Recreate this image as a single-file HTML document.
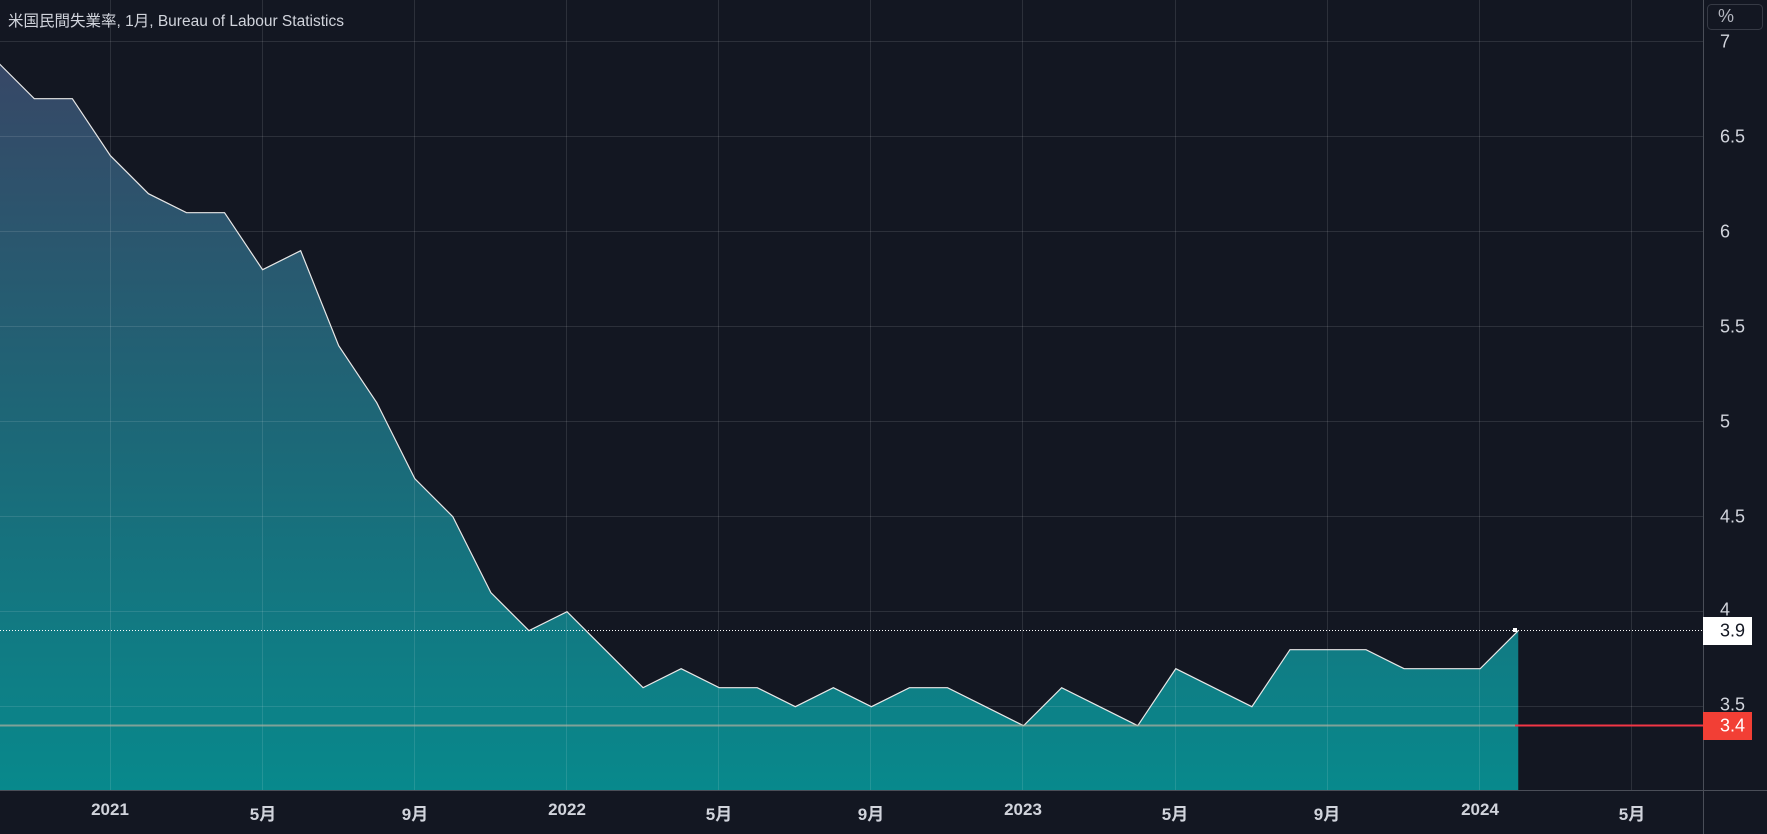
<!DOCTYPE html>
<html><head><meta charset="utf-8"><style>
html,body{margin:0;padding:0;background:#131722;}
body{width:1767px;height:834px;overflow:hidden;position:relative;font-family:"Liberation Sans","Noto Sans CJK JP",sans-serif;}
.t{position:absolute;color:#d1d4dc;}
.py{position:absolute;left:1720px;color:#d1d4dc;font-size:18px;transform:translateY(-50%);}
.px{position:absolute;top:800px;color:#d1d4dc;font-size:17px;font-weight:bold;transform:translateX(-50%);}
</style></head><body>
<svg width="1767" height="834" style="position:absolute;left:0;top:0">
<defs><linearGradient id="g" x1="0" y1="0" x2="0" y2="1" gradientUnits="objectBoundingBox">
<stop offset="0" stop-color="#08898c"/><stop offset="0.5" stop-color="#1d6777"/><stop offset="1" stop-color="#374766"/></linearGradient></defs>
<g transform="translate(110.4,1371.7) scale(38.05,-190)">
<polygon fill="url(#g)" points="-3,3.06 -3,6.9 -2,6.7 -1,6.7 0,6.4 1,6.2 2,6.1 3,6.1 4,5.8 5,5.9 6,5.4 7,5.1 8,4.7 9,4.5 10,4.1 11,3.9 12,4.0 13,3.8 14,3.6 15,3.7 16,3.6 17,3.6 18,3.5 19,3.6 20,3.5 21,3.6 22,3.6 23,3.5 24,3.4 25,3.6 26,3.5 27,3.4 28,3.7 29,3.6 30,3.5 31,3.8 32,3.8 33,3.8 34,3.7 35,3.7 36,3.7 37,3.9 37,3.06"/>
</g>
<g stroke="#ffffff" stroke-opacity="0.11" stroke-width="1">
<line x1="0" y1="41.5" x2="1703" y2="41.5"/><line x1="0" y1="136.5" x2="1703" y2="136.5"/><line x1="0" y1="231.5" x2="1703" y2="231.5"/><line x1="0" y1="326.5" x2="1703" y2="326.5"/><line x1="0" y1="421.5" x2="1703" y2="421.5"/><line x1="0" y1="516.5" x2="1703" y2="516.5"/><line x1="0" y1="611.5" x2="1703" y2="611.5"/><line x1="0" y1="706.5" x2="1703" y2="706.5"/>
<line x1="110.5" y1="0" x2="110.5" y2="790"/><line x1="262.5" y1="0" x2="262.5" y2="790"/><line x1="414.5" y1="0" x2="414.5" y2="790"/><line x1="566.5" y1="0" x2="566.5" y2="790"/><line x1="718.5" y1="0" x2="718.5" y2="790"/><line x1="870.5" y1="0" x2="870.5" y2="790"/><line x1="1022.5" y1="0" x2="1022.5" y2="790"/><line x1="1175.5" y1="0" x2="1175.5" y2="790"/><line x1="1327.5" y1="0" x2="1327.5" y2="790"/><line x1="1479.5" y1="0" x2="1479.5" y2="790"/><line x1="1631.5" y1="0" x2="1631.5" y2="790"/>
</g>
<g transform="translate(110.4,1371.7) scale(38.05,-190)">
<polyline fill="none" stroke="#e8e8e8" stroke-width="1.2" vector-effect="non-scaling-stroke" points="-3,6.9 -2,6.7 -1,6.7 0,6.4 1,6.2 2,6.1 3,6.1 4,5.8 5,5.9 6,5.4 7,5.1 8,4.7 9,4.5 10,4.1 11,3.9 12,4.0 13,3.8 14,3.6 15,3.7 16,3.6 17,3.6 18,3.5 19,3.6 20,3.5 21,3.6 22,3.6 23,3.5 24,3.4 25,3.6 26,3.5 27,3.4 28,3.7 29,3.6 30,3.5 31,3.8 32,3.8 33,3.8 34,3.7 35,3.7 36,3.7 37,3.9"/>
</g>
<line x1="0" y1="630.5" x2="1703" y2="630.5" stroke="#ffffff" stroke-width="1" stroke-dasharray="1,2"/>
<line x1="0" y1="725.5" x2="1515" y2="725.5" stroke="#b0b0a0" stroke-width="2" opacity="0.7"/>
<line x1="1515" y1="725.5" x2="1703" y2="725.5" stroke="#f23645" stroke-width="2"/>
<rect x="1513" y="628" width="4" height="4" fill="#fff"/>
<rect x="0" y="791" width="1767" height="43" fill="#131722"/>
<line x1="1703.5" y1="0" x2="1703.5" y2="834" stroke="#4a4e58"/>
<line x1="0" y1="790.5" x2="1767" y2="790.5" stroke="#4a4e58"/>
<rect x="1707.5" y="4.5" width="55" height="25" rx="4" fill="none" stroke="#363a45"/>
<rect x="1703" y="617" width="49" height="28" fill="#ffffff"/>
<rect x="1703" y="712" width="49" height="28" fill="#f23f35"/>
</svg>
<div class="t" style="left:8px;top:9px;font-size:15.5px;">米国民間失業率, 1月, Bureau of Labour Statistics</div>
<div class="t" style="left:1718px;top:6px;font-size:18px;color:#b2b5be;">%</div>
<div class="py" style="top:42px">7</div>
<div class="py" style="top:137px">6.5</div>
<div class="py" style="top:232px">6</div>
<div class="py" style="top:327px">5.5</div>
<div class="py" style="top:422px">5</div>
<div class="py" style="top:517px">4.5</div>
<div class="py" style="top:610px">4</div>
<div class="py" style="top:705px">3.5</div>
<div class="py" style="top:631px;color:#131722;">3.9</div>
<div class="py" style="top:726px;color:#fff;">3.4</div>
<div class="px" style="left:110px">2021</div>
<div class="px" style="left:263px">5月</div>
<div class="px" style="left:415px">9月</div>
<div class="px" style="left:567px">2022</div>
<div class="px" style="left:719px">5月</div>
<div class="px" style="left:871px">9月</div>
<div class="px" style="left:1023px">2023</div>
<div class="px" style="left:1175px">5月</div>
<div class="px" style="left:1327px">9月</div>
<div class="px" style="left:1480px">2024</div>
<div class="px" style="left:1632px">5月</div>
</body></html>
